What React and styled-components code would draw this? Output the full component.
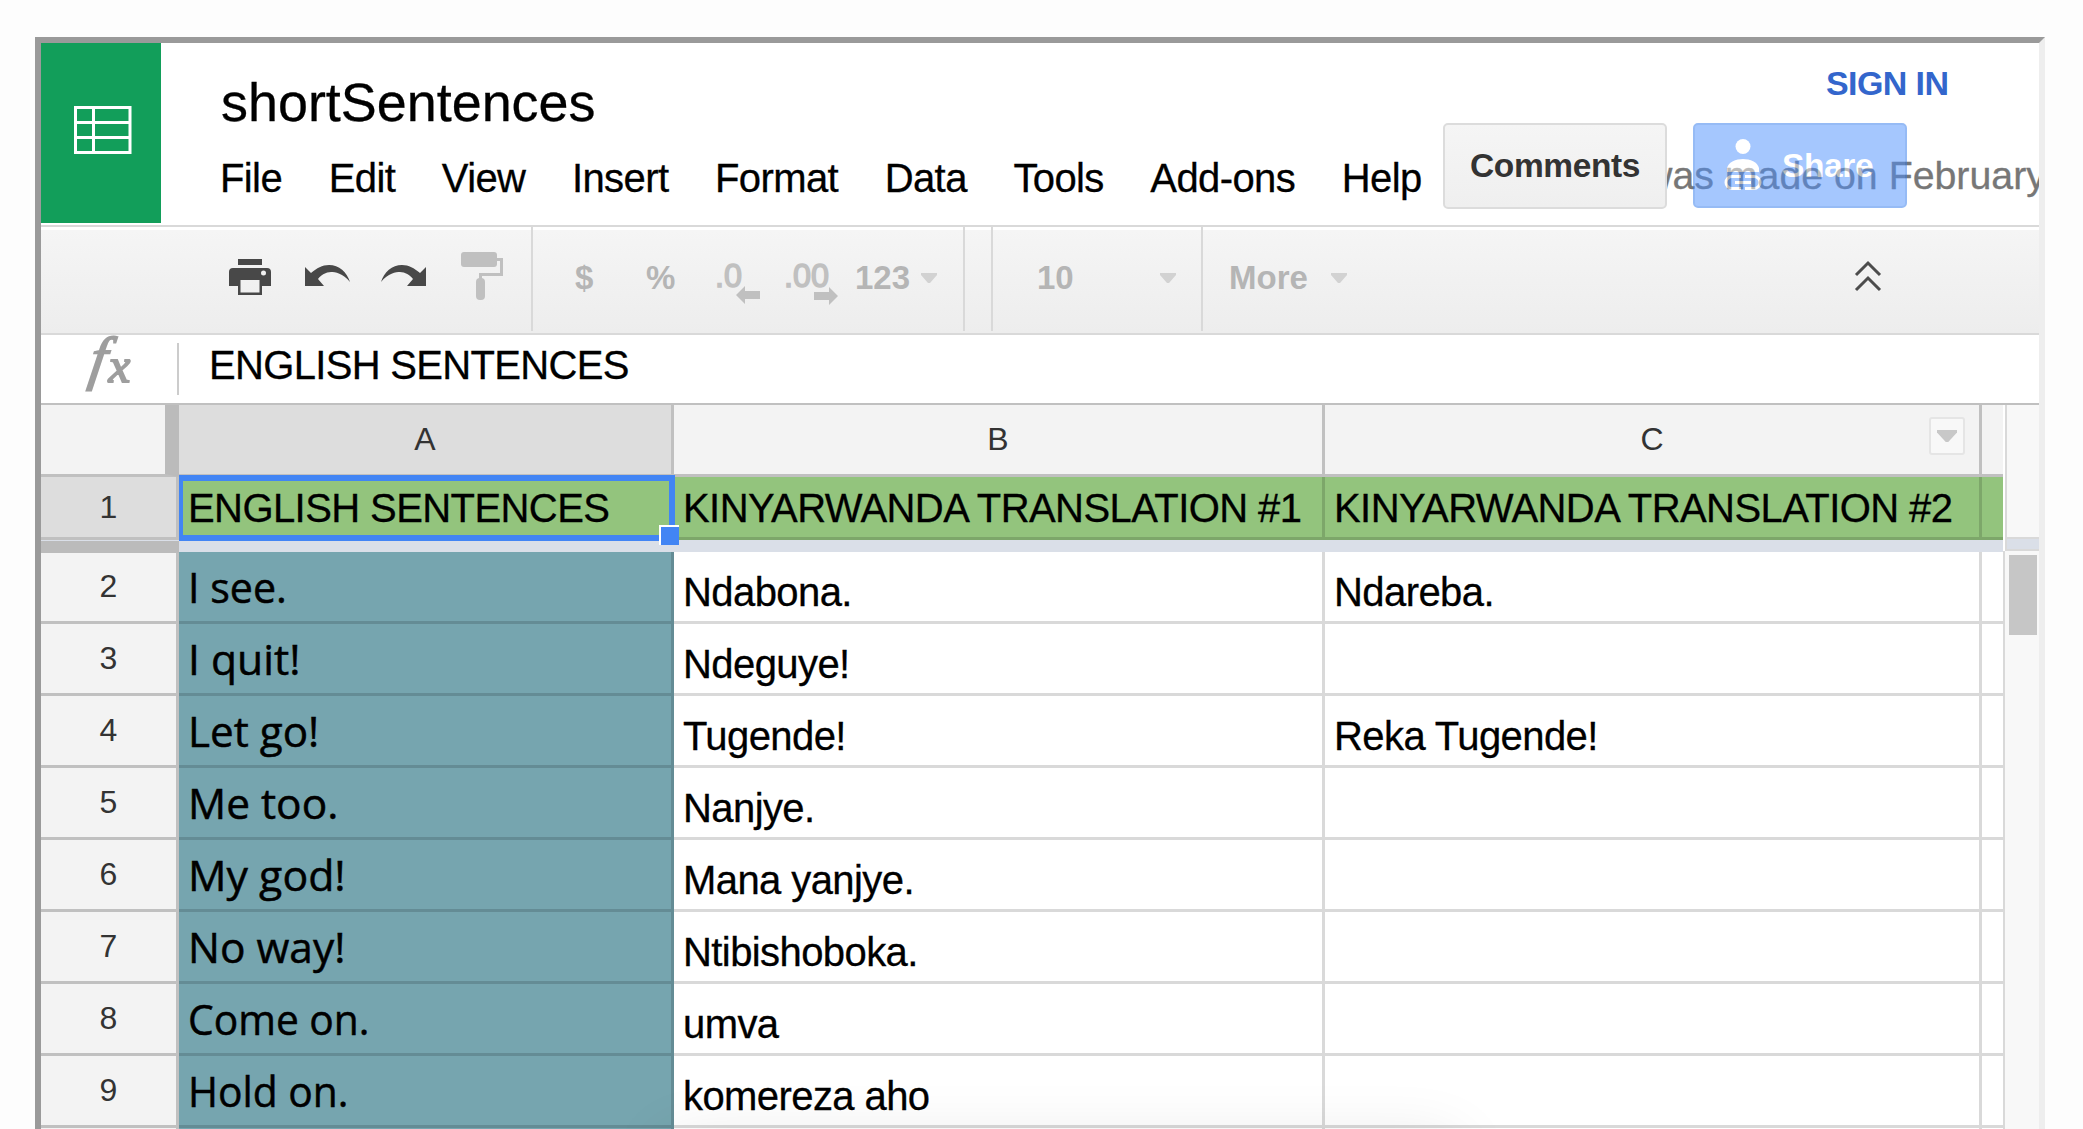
import React from 'react';
import styled, { createGlobalStyle } from 'styled-components';

const Global = createGlobalStyle`
  *{box-sizing:border-box}
  html,body{margin:0;background:#fdfdfd}
  body{width:2083px;height:1129px;overflow:hidden;font-family:"Liberation Sans",Arial,sans-serif;color:#000}
  svg{display:block;overflow:visible}
`;
const Frame = styled.div`
  width:2010px;height:1140px;margin:37px 0 0 35px;background:#fff;
  border:6px solid;border-color:#9a9a9a #eee #eee #9a9a9a;
  display:flex;flex-direction:column;overflow:hidden;
`;
const Header = styled.header`height:184px;border-bottom:2px solid #d9d9d9;display:flex;flex:none;position:relative;`;
const Logo = styled.div`width:120px;height:180px;background:#129e5a;padding:63px 0 0 32px;flex:none;`;
const Titles = styled.div`padding:31px 0 0 60px;`;
const Title = styled.h1`margin:0;font-weight:400;font-size:53.9px;line-height:56px;white-space:nowrap;-webkit-text-stroke:.3px;`;
const Menu = styled.nav`display:flex;gap:46.6px;margin:25px 0 0 -1px;`;
const MenuItem = styled.span`font-size:40px;line-height:46px;letter-spacing:-.6px;white-space:nowrap;-webkit-text-stroke:.3px;`;
const SignIn = styled.a`position:absolute;left:1785px;top:21px;font-size:34px;line-height:38px;letter-spacing:-.6px;font-weight:700;color:#36c;white-space:nowrap;`;
const Saved = styled.div`position:absolute;left:1603px;top:109px;width:395px;overflow:hidden;font-size:39.3px;line-height:46px;color:#777;white-space:nowrap;-webkit-text-stroke:.3px;`;
const Buttons = styled.div`position:absolute;left:1402px;top:80px;display:flex;gap:26px;align-items:flex-start;`;
const Button = styled.button`
  padding:0;border-radius:5px;letter-spacing:-.4px;
  font:700 33.5px/38px "Liberation Sans",Arial,sans-serif;
  display:flex;align-items:center;white-space:nowrap;
  ${p => p.$share
    ? 'width:214px;height:85px;border:2px solid #3079ed;background:#4d90fe;opacity:.5;color:#fff;padding-left:29px;gap:20px;'
    : 'width:224px;height:86px;border:2px solid #dcdcdc;background:linear-gradient(#f5f5f5,#efefef);color:#333;justify-content:center;'}
`;
const Toolbar = styled.div`
  height:108px;flex:none;border-top:3px solid #fff;border-bottom:2px solid #d9d9d9;
  background:linear-gradient(#f5f5f5,#ededed);background-clip:padding-box;display:flex;align-items:stretch;
`;
const Group = styled.div`
  width:${p => p.$w}px;border-right:${p => (p.$last ? 0 : 2)}px solid #d9d9d9;margin:-3px 0 2px;padding:4px 0 0 ${p => p.$pad || 0}px;
  display:flex;flex:none;align-items:flex-start;
`;
const Tool = styled.span`
  width:${p => p.$w}px;height:92px;flex:none;display:flex;align-items:center;
  font-size:33px;font-weight:700;color:#b5b5b5;line-height:38px;white-space:nowrap;padding-top:${p => p.$down || 0}px;
`;
const FormulaBar = styled.div`height:70px;flex:none;border-bottom:2px solid #c0c0c0;display:flex;`;
const Fx = styled.div`
  width:138px;height:52px;margin-top:8px;border-right:2px solid #ccc;padding-left:50px;color:#9e9e9e;
  font:italic 400 59px/30px "Liberation Serif",serif;-webkit-text-stroke:1.8px #9e9e9e;display:flex;align-items:flex-start;
`;
const FxMain = styled.span`display:block;transform:skewX(-9deg);`;
const FxSub = styled.span`font-size:49px;line-height:45.5px;margin-left:1px;`;
const Formula = styled.div`padding-left:30px;font-size:40px;line-height:60px;letter-spacing:-.68px;white-space:nowrap;-webkit-text-stroke:.3px;`;
const Body = styled.div`display:flex;`;
const Grid = styled.div`width:1962px;flex:none;position:relative;`;
const Row = styled.div`display:grid;grid-template-columns:138px 495px 651px 657px 21px;height:${p => p.$h}px;`;
const Head = styled.div`
  background:${p => (p.$on ? '#ddd' : '#f3f3f3')};color:#333;font-size:32px;
  border-right:${p => (p.$end ? 0 : p.$corner ? 14 : 3)}px solid ${p => (p.$corner ? '#bbb' : '#c0c0c0')};
  border-bottom:3px solid #c0c0c0;display:flex;align-items:center;justify-content:center;
  padding-bottom:${p => (p.$row ? 0 : 1)}px;position:relative;
`;
const Cell = styled.div`
  overflow:hidden;white-space:nowrap;padding-left:9px;font-size:40px;line-height:${p => p.$lh}px;letter-spacing:-.58px;
  background:${p => p.$bg};border-right:${p => (p.$end ? 0 : 3)}px solid ${p => p.$line};border-bottom:3px solid ${p => p.$line};
  -webkit-text-stroke:.3px;
`;
const SentenceCell = styled(Cell)`font-family:"Open Sans",sans-serif;font-size:42px;letter-spacing:0;-webkit-text-stroke:.5px;`;
const Sentence = styled.span`display:inline-block;transform:scaleX(${p => p.$s || 1});transform-origin:0 50%;`;
const Drop = styled.span`
  position:absolute;right:14px;top:12px;width:36px;height:38px;border:2px solid #e5e5e5;border-radius:3px;background:#f8f8f8;
  display:flex;align-items:center;justify-content:center;
`;
const Freeze = styled.div`height:12px;display:flex;background:#dadfe8;`;
const FreezeCorner = styled.div`width:138px;height:13px;background:#bbb;border-top:1px solid #dadfe8;z-index:1;`;
const Selection = styled.div`position:absolute;left:138px;top:70px;width:496px;height:66px;border:6px solid #4285f4;border-left-width:4px;`;
const Handle = styled.div`position:absolute;left:618px;top:120px;width:20px;height:20px;background:#4285f4;border:solid #fff;border-width:2px 0 0 2px;`;
const Shade = styled.div`
  position:absolute;left:625px;top:737px;width:790px;height:100px;box-shadow:0 0 65px rgba(0,0,0,.11);
`;
const Side = styled.div`width:36px;flex:none;`;
const SideTop = styled.div`height:134px;margin-left:2px;border-bottom:2px solid #d9d9d9;background:#f8f8f8;border-left:2px solid #d9d9d9;`;
const SideFreeze = styled.div`height:12px;margin-left:2px;border-left:2px solid #d9d9d9;border-bottom:2px solid #d9d9d9;background:#dadfe8;`;
const SideTrack = styled.div`height:600px;border-left:2px solid #d9d9d9;background:#f8f8f8;padding:4px 2px 0 4px;`;
const Thumb = styled.div`height:80px;background:#c6c6c6;`;

const Arrow = ({ w = 16, h = 10, c = '#d2d2d2' }) => (
  <svg width={w} height={h} viewBox="0 0 16 10" preserveAspectRatio="none"><path d="M0 0H16V2L9 10H7L0 2Z" fill={c} /></svg>
);
const SheetIcon = () => (
  <svg width="60" height="50" viewBox="0 0 60 50" fill="none" stroke="#fff" strokeWidth="3">
    <path d="M2.500 1.500H57V46.500H2.500ZM2.500 16.500H57M2.500 31.500H57M20.500 1.500V46.500" />
  </svg>
);
const Printer = () => (
  <svg width="42" height="36" viewBox="0 0 42 36" fill="#484848">
    <path d="M9 0H33V6H9Z" />
    <path fillRule="evenodd" d="M4 9H38Q42 9 42 13V27H33V36H9V27H0V13Q0 9 4 9ZM11.500 21V33.500H30.500V21ZM34.500 11.500A2.500 2.500 0 1 0 34.500 16.500A2.500 2.500 0 1 0 34.500 11.500Z" />
  </svg>
);
const Undo = ({ flip }) => (
  <svg width="45" height="24" viewBox="0 0 45 24" fill="#484848">
    <path transform={flip ? 'translate(45 0) scale(-1 1)' : undefined} d="M0 2L6 8C12 3 17 0 24 0C34 0 42 7 45 17C38 8 30 7 26 7C21 7 16 10 13 14L19 21H0Z" />
  </svg>
);
const Roller = () => (
  <svg width="42" height="50" viewBox="0 0 42 50" fill="#c0c0c0">
    <rect width="36" height="15" rx="3" /><rect x="15" y="26" width="9" height="22" rx="4" />
    <path d="M36 7.500H40.500V22.500H19.500V28" fill="none" stroke="#c0c0c0" strokeWidth="3" />
  </svg>
);
const DecimalIcon = ({ more }) => (
  <svg width="54" height="56" viewBox="0 0 54 56" fill="#c0c0c0">
    <text x={more ? -1 : -1} y="38" fontFamily="Liberation Sans" fontSize="34" fontWeight="400" stroke="#c0c0c0" strokeWidth="1.5"
      textLength={more ? 45 : 27} lengthAdjust="spacingAndGlyphs">{more ? '.00' : '.0'}</text>
    {more ? <path d="M29 43H44V38L53 47L44 56V51H29Z" /> : <path d="M44 42H29V37L20 46L29 55V50H44Z" />}
  </svg>
);
const Person = () => (
  <svg width="38" height="54" viewBox="0 0 38 54" fill="#fff">
    <ellipse cx="19" cy="7.500" rx="7.500" ry="7.500" />
    <path d="M3 33V29C6 17 32 17 35 29V33Z" />
    <path fillRule="evenodd" d="M8 36H17V39H8A4.500 4.500 0 0 0 8 48H17V51H8A7.500 7.500 0 0 1 8 36ZM21 36H30A7.500 7.500 0 0 1 30 51H21V48H30A4.500 4.500 0 0 0 30 39H21ZM11 42H27V45H11Z" />
  </svg>
);
const Chevrons = () => (
  <svg width="28" height="35" viewBox="0 0 28 35" fill="none" stroke="#4c4c4c" strokeWidth="3"><path d="M2 15L14 3L26 15M2 30L14 18L26 30" /></svg>
);

const menu = ['File', 'Edit', 'View', 'Insert', 'Format', 'Data', 'Tools', 'Add-ons', 'Help'];
const rows = [
  ['I see.', 0.98, 'Ndabona.', 'Ndareba.'],
  ['I quit!', 1.015, 'Ndeguye!', ''],
  ['Let go!', 1.005, 'Tugende!', 'Reka Tugende!'],
  ['Me too.', 1.01, 'Nanjye.', ''],
  ['My god!', 1.02, 'Mana yanjye.', ''],
  ['No way!', 1.01, 'Ntibishoboka.', ''],
  ['Come on.', 0.97, 'umva', ''],
  ['Hold on.', 0.97, 'komereza aho', ''],
  ['', 1, '', ''],
];

export default function App() {
  return (
    <>
      <Global />
      <Frame>
        <Header>
          <Logo><SheetIcon /></Logo>
          <Titles>
            <Title>shortSentences</Title>
            <Menu>{menu.map(m => <MenuItem key={m}>{m}</MenuItem>)}</Menu>
          </Titles>
          <SignIn>SIGN IN</SignIn>
          <Saved>was made on February</Saved>
          <Buttons>
            <Button>Comments</Button>
            <Button $share><Person />Share</Button>
          </Buttons>
        </Header>
        <Toolbar>
          <Group $w={492} $pad={188}>
            <Tool $w={76}><Printer /></Tool><Tool $w={76}><Undo /></Tool><Tool $w={80}><Undo flip /></Tool><Tool $w={50}><Roller /></Tool>
          </Group>
          <Group $w={432} $pad={42}>
            <Tool $w={71} $down={1}>$</Tool><Tool $w={70} $down={1}>%</Tool><Tool $w={69}><DecimalIcon /></Tool><Tool $w={70}><DecimalIcon more /></Tool>
            <Tool $w={66} $down={1}>123</Tool><Tool $w={20} $down={2}><Arrow /></Tool>
          </Group>
          <Group $w={28} />
          <Group $w={210} $pad={44}><Tool $w={123} $down={1}>10</Tool><Tool $w={20} $down={2}><Arrow /></Tool></Group>
          <Group $w={836} $pad={26} $last><Tool $w={102} $down={1}>More</Tool><Tool $w={523} $down={2}><Arrow /></Tool><Tool $w={30}><Chevrons /></Tool></Group>
        </Toolbar>
        <FormulaBar><Fx><FxMain>f</FxMain><FxSub>x</FxSub></Fx><Formula>ENGLISH SENTENCES</Formula></FormulaBar>
        <Body>
          <Grid>
            <Row $h={72}>
              <Head $corner /><Head $on>A</Head><Head>B</Head><Head>C<Drop><Arrow w={20} h={12} c="#c8c8c8" /></Drop></Head><Head $end />
            </Row>
            <Row $h={63}>
              <Head $on $row>1</Head>
              {['ENGLISH SENTENCES', 'KINYARWANDA TRANSLATION #1', 'KINYARWANDA TRANSLATION #2', ''].map((t, i) => (
                <Cell key={i} $lh={62} $bg="#93c47d" $line="#7da76a" $end={i === 3}>{t}</Cell>
              ))}
            </Row>
            <Freeze><FreezeCorner /></Freeze>
            {rows.map(([english, stretch, first, second], n) => (
              <Row key={n} $h={72}>
                <Head $row>{n < 8 ? n + 2 : ''}</Head>
                <SentenceCell $lh={70} $bg="#76a5af" $line="#648c95"><Sentence $s={stretch}>{english}</Sentence></SentenceCell>
                <Cell $lh={81} $bg="#fff" $line="#d9d9d9">{first}</Cell>
                <Cell $lh={81} $bg="#fff" $line="#d9d9d9">{second}</Cell>
                <Cell $lh={81} $bg="#fff" $line="#d9d9d9" $end />
              </Row>
            ))}
            <Shade />
            <Selection /><Handle />
          </Grid>
          <Side><SideTop /><SideFreeze /><SideTrack><Thumb /></SideTrack></Side>
        </Body>
      </Frame>
    </>
  );
}
